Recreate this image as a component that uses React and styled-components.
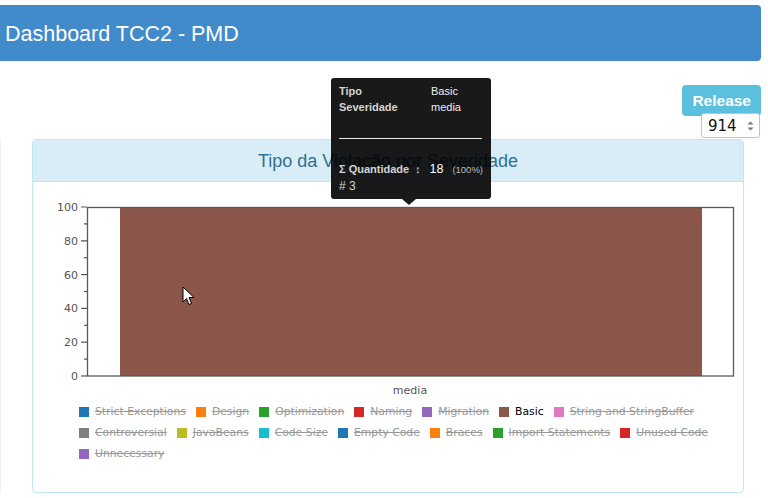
import React from "react";
import styled, { createGlobalStyle } from "styled-components";

const GlobalStyle = createGlobalStyle`
  html, body {
    margin: 0;
    padding: 0;
    background: #fff;
    overflow: hidden;
  }
  body {
    font-family: "Liberation Sans", Arial, sans-serif;
  }
`;

const Page = styled.div`
  position: relative;
  width: 768px;
  height: 498px;
  padding-top: 5px;
  box-sizing: border-box;
`;

const Header = styled.div`
  margin-left: -6px;
  width: 767px;
  height: 56px;
  background: #428bca;
  border-radius: 4px;
  display: flex;
  align-items: center;
  padding-left: 11px;
  box-sizing: border-box;
`;

const HeaderTitle = styled.h1`
  margin: 0;
  padding-top: 2px;
  font-size: 21.5px;
  font-weight: normal;
  color: #fff;
`;

const Controls = styled.div`
  display: flex;
  flex-direction: column;
  align-items: flex-end;
  margin-top: 24px;
  padding-right: 7px;
`;

const ReleaseBadge = styled.div`
  height: 31px;
  padding: 0 10px;
  display: flex;
  align-items: center;
  background: #5bc0de;
  color: #fff;
  font-weight: bold;
  font-size: 15.5px;
  border-radius: 4px;
`;

const NumberBox = styled.div`
  margin-top: -3px;
  margin-right: 1px;
  width: 59px;
  height: 25px;
  box-sizing: border-box;
  border: 1px solid #c4c4c4;
  border-radius: 3px;
  background: #fff;
  display: flex;
  align-items: center;
  justify-content: space-between;
  padding: 0 5px 0 6px;
  font-family: "DejaVu Sans", sans-serif;
  font-size: 15px;
  color: #111;
`;

const Main = styled.div`
  margin-top: 1px;
  border-left: 1px solid #f1f1f1;
  padding-left: 31px;
`;

const Panel = styled.div`
  width: 712px;
  height: 354px;
  box-sizing: border-box;
  border: 1px solid #bce8f1;
  border-radius: 4px;
  overflow: hidden;
`;

const PanelHeading = styled.div`
  height: 42px;
  box-sizing: border-box;
  background: #d9edf7;
  border-bottom: 1px solid #bce8f1;
  color: #31708f;
  font-size: 18px;
  display: flex;
  align-items: center;
  justify-content: center;
  padding-top: 2px;
`;

const PanelBody = styled.div`
  display: flex;
  flex-direction: column;
`;

const Legend = styled.div`
  margin: 3px 0 0 46px;
  width: 654px;
  display: flex;
  flex-wrap: wrap;
  column-gap: 10px;
  font-family: "DejaVu Sans", sans-serif;
  font-size: 10.8px;
`;

const LegendItem = styled.div`
  display: flex;
  align-items: center;
  height: 21px;
  color: ${(p) => (p.$off ? "#999" : "#000")};
  text-decoration: ${(p) => (p.$off ? "line-through" : "none")};
`;

const Swatch = styled.span`
  width: 10px;
  height: 10px;
  margin-right: 6px;
  background: ${(p) => p.$color};
`;

const Tooltip = styled.div`
  position: absolute;
  left: 331px;
  top: 78px;
  width: 160px;
  height: 121px;
  box-sizing: border-box;
  padding: 5px 8px 0;
  background: rgba(0, 0, 0, 0.9);
  border-radius: 3px;
  color: #eee;
  font-size: 11px;
  &::after {
    content: "";
    position: absolute;
    left: 71px;
    bottom: -6px;
    border-left: 7px solid transparent;
    border-right: 7px solid transparent;
    border-top: 6px solid rgba(0, 0, 0, 0.9);
  }
`;

const TipRow = styled.div`
  display: grid;
  grid-template-columns: 92px auto;
  line-height: 16px;
`;

const TipLabel = styled.span`
  font-weight: bold;
  color: #d4d4d4;
`;

const TipRule = styled.div`
  margin: 23px 1px 22px 0;
  height: 1px;
  background: #e8e8e8;
`;

const TipMeasure = styled.div`
  display: flex;
  align-items: baseline;
  line-height: 17px;
`;

const TipMeasureLabel = styled.span`
  width: 92px;
  display: flex;
  justify-content: space-between;
  padding-right: 9px;
  box-sizing: border-box;
  font-weight: bold;
  color: #d4d4d4;
`;

const TipValue = styled.span`
  font-size: 12.5px;
  color: #fff;
`;

const TipPercent = styled.span`
  margin-left: 9px;
  font-size: 9.5px;
  color: #bbb;
`;

const TipCount = styled.div`
  line-height: 17px;
  font-size: 12px;
  color: #d4d4d4;
`;

const Cursor = styled.svg`
  position: absolute;
  left: 182px;
  top: 286px;
`;

const legend = [
  ["Strict Exceptions", "#1f77b4"],
  ["Design", "#ff7f0e"],
  ["Optimization", "#2ca02c"],
  ["Naming", "#d62728"],
  ["Migration", "#9467bd"],
  ["Basic", "#8c564b", true],
  ["String and StringBuffer", "#e377c2"],
  ["Controversial", "#7f7f7f"],
  ["JavaBeans", "#bcbd22"],
  ["Code Size", "#17becf"],
  ["Empty Code", "#1f77b4"],
  ["Braces", "#ff7f0e"],
  ["Import Statements", "#2ca02c"],
  ["Unused Code", "#d62728"],
  ["Unnecessary", "#9467bd"],
];

function Chart() {
  const ticks = [];
  for (let v = 0; v <= 100; v += 10) {
    const y = 194 - v * 1.69;
    const major = v % 20 === 0;
    ticks.push(
      <g key={v}>
        <line x1={major ? 48 : 51} x2={54} y1={y} y2={y} stroke="#555" strokeWidth="1.2" />
        {major && (
          <text x={45} y={y + 4} textAnchor="end" fill="#555" fontSize="11" fontFamily="DejaVu Sans">
            {v}
          </text>
        )}
      </g>
    );
  }
  return (
    <svg width="710" height="216">
      <rect x="87" y="25" width="582" height="169" fill="#8c564b" />
      <rect x="54.5" y="25.5" width="646" height="168.5" fill="none" stroke="#5a5a5a" strokeWidth="1.3" />
      {ticks}
      <text x="377" y="212" textAnchor="middle" fill="#555" fontSize="11" fontFamily="DejaVu Sans">
        media
      </text>
    </svg>
  );
}

export default function App() {
  return (
    <Page>
      <GlobalStyle />
      <Header>
        <HeaderTitle>Dashboard TCC2 - PMD</HeaderTitle>
      </Header>
      <Controls>
        <ReleaseBadge>Release</ReleaseBadge>
        <NumberBox>
          <span>914</span>
          <svg width="7" height="12" viewBox="0 0 7 12">
            <path d="M0.5 4.5 L3.5 1.5 L6.5 4.5 Z" fill="#777" />
            <path d="M0.5 7.5 L3.5 10.5 L6.5 7.5 Z" fill="#777" />
          </svg>
        </NumberBox>
      </Controls>
      <Main>
        <Panel>
          <PanelHeading>Tipo da Violação por Severidade</PanelHeading>
          <PanelBody>
            <Chart />
            <Legend>
              {legend.map(([name, color, on]) => (
                <LegendItem key={name} $off={!on}>
                  <Swatch $color={color} />
                  {name}
                </LegendItem>
              ))}
            </Legend>
          </PanelBody>
        </Panel>
      </Main>
      <Tooltip>
        <TipRow>
          <TipLabel>Tipo</TipLabel>
          <span>Basic</span>
        </TipRow>
        <TipRow>
          <TipLabel>Severidade</TipLabel>
          <span>media</span>
        </TipRow>
        <TipRule />
        <TipMeasure>
          <TipMeasureLabel>
            <span>Σ Quantidade</span>
            <span>↕</span>
          </TipMeasureLabel>
          <TipValue>18</TipValue>
          <TipPercent>(100%)</TipPercent>
        </TipMeasure>
        <TipCount># 3</TipCount>
      </Tooltip>
      <Cursor width="13" height="21" viewBox="0 0 13 21">
        <path d="M1 1 L1 16 L4.5 12.5 L7 18.5 L9.5 17.5 L7 11.5 L12 11.5 Z" fill="#fff" stroke="#000" strokeWidth="1" strokeLinejoin="round" />
      </Cursor>
    </Page>
  );
}
